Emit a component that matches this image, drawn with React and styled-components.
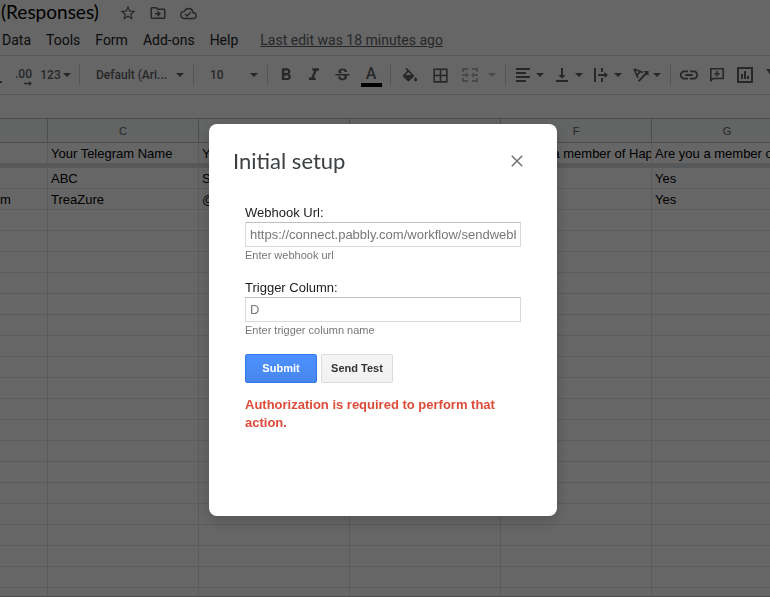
import React from "react";
import styled, { createGlobalStyle } from "styled-components";
import {
  MdStarBorder,
  MdOutlineDriveFileMove,
  MdOutlineCloudDone,
  MdFormatBold,
  MdFormatItalic,
  MdStrikethroughS,
  MdBorderAll,
  MdLink,
} from "react-icons/md";

const GlobalStyle = createGlobalStyle`
  * {
    box-sizing: border-box;
  }
  body {
    margin: 0;
    background: #fff;
    font-family: "Liberation Sans", Arial, sans-serif;
  }
  button,
  input,
  select {
    font-family: inherit;
    margin: 0;
  }
`;

const Page = styled.div`
  display: flex;
  flex-direction: column;
  height: 100vh;
  overflow: hidden;
`;

const TitleBar = styled.header`
  display: flex;
  align-items: center;
  height: 26px;
  flex-shrink: 0;
`;

const DocTitle = styled.h1`
  margin: 0;
  padding: 0 0 2px 1px;
  width: 113px;
  font: 400 19px/24px Lato, sans-serif;
  color: #000;
  white-space: nowrap;
`;

const IconButton = styled.button`
  display: inline-flex;
  align-items: center;
  justify-content: center;
  width: ${({ $width }) => $width || 28}px;
  height: 26px;
  padding: 0;
  border: 0;
  background: none;
  color: ${({ $muted }) => ($muted ? "#b8b8b8" : "#5f6368")};
  flex-shrink: 0;
`;

const MenuBar = styled.nav`
  display: flex;
  align-items: center;
  gap: 1px;
  height: 29px;
  padding-bottom: 2px;
  margin-left: -5px;
  flex-shrink: 0;
  white-space: nowrap;
`;

const MenuItem = styled.button`
  padding: 0 7px;
  border: 0;
  background: none;
  font: 400 14px/20px Roboto, sans-serif;
  color: #202124;
`;

const LastEdit = styled.a`
  margin-left: 14px;
  font: 400 14px/20px Roboto, sans-serif;
  color: #5f6368;
  text-decoration: underline;
`;

const Toolbar = styled.div`
  display: flex;
  align-items: center;
  height: 40px;
  flex-shrink: 0;
  overflow: hidden;
  border-top: 1px solid #dadce0;
  border-bottom: 1px solid #dadce0;
`;

const Stub = styled.span`
  width: 8px;
  height: 16px;
  flex-shrink: 0;
  background: linear-gradient(#5f6368, #5f6368) 0 100% / 2px 2px no-repeat;
`;

const Separator = styled.span`
  width: 1px;
  height: 20px;
  margin: 0 4px;
  flex-shrink: 0;
  background: #d0d2d5;
`;

const DecimalButton = styled(IconButton)`
  flex-direction: column;
  align-items: flex-end;
  justify-content: flex-end;
  padding: 0 4px 2px 0;
  font: 500 12px/14px Roboto, sans-serif;
`;

const NumberFormat = styled(IconButton)`
  gap: 2px;
  font: 500 12px/16px Roboto, sans-serif;
`;

const SelectBox = styled.label`
  display: flex;
  align-items: center;
  width: ${({ $width }) => $width}px;
  padding: 0 5px 0 12px;
  flex-shrink: 0;
  color: #5f6368;
`;

const ToolbarSelect = styled.select`
  appearance: none;
  flex: 1;
  min-width: 0;
  padding: 0;
  border: 0;
  background: none;
  color: inherit;
  font: 500 12px/16px Roboto, sans-serif;
`;

const SplitButton = styled(IconButton)`
  justify-content: flex-start;
  gap: ${({ $gap }) => $gap || 6}px;
  padding-left: ${({ $pad }) => $pad || 6}px;
`;

const ColorButton = styled(IconButton)`
  flex-direction: column;
  justify-content: flex-end;
  height: 32px;
  padding-bottom: 4px;
  font: 500 16px/18px Roboto, sans-serif;
`;

const ColorBar = styled.span`
  width: 21px;
  height: 4px;
  background: #000;
`;

const FormulaBar = styled.div`
  height: 23px;
  flex-shrink: 0;
`;

const SheetArea = styled.main`
  flex: 1;
  min-height: 0;
  overflow: hidden;
  border-top: 1px solid #c0c0c0;
  border-bottom: 1px solid #c0c0c0;
`;

const SheetTable = styled.table`
  table-layout: fixed;
  width: 803px;
  border-collapse: separate;
  border-spacing: 0;
`;

const ColumnHead = styled.th`
  height: 24px;
  padding: 0;
  border-right: 1px solid #c0c0c0;
  border-bottom: 1px solid #c0c0c0;
  background: #f8f9fa;
  font: 400 11px/16px "Liberation Sans", Arial, sans-serif;
  color: #5f6368;
`;

const Cell = styled.td`
  height: ${({ $frozen }) => ($frozen ? 25 : 21)}px;
  padding: 2px 0 0 ${({ $cut }) => ($cut ? 0 : 3)}px;
  border-right: 1px solid #e2e3e3;
  border-bottom: ${({ $frozen }) =>
    $frozen ? "5px solid #dadce0" : "1px solid #e2e3e3"};
  font-size: 13px;
  line-height: 16px;
  color: #000;
  white-space: nowrap;
  overflow: hidden;
`;

const Backdrop = styled.div`
  position: fixed;
  inset: 0;
  display: flex;
  align-items: flex-start;
  justify-content: center;
  padding: 124px 4px 0 0;
  background: rgba(0, 0, 0, 0.6);
`;

const Dialog = styled.section`
  width: 348px;
  min-height: 392px;
  padding: 24px;
  border-radius: 8px;
  background: #fff;
  box-shadow: 0 4px 16px rgba(0, 0, 0, 0.2);
`;

const DialogHeader = styled.div`
  display: flex;
  align-items: center;
  justify-content: space-between;
  margin-bottom: 28px;
  padding-right: 5px;
`;

const DialogTitle = styled.h2`
  margin: 0;
  font: 400 22px/26px Lato, sans-serif;
  color: #3c4043;
`;

const CloseButton = styled.button`
  display: flex;
  padding: 4px;
  border: 0;
  background: none;
  color: #757575;
`;

const Form = styled.form`
  padding: 0 12px;
`;

const Field = styled.div`
  display: flex;
  flex-direction: column;
  margin-bottom: 14px;
`;

const FieldLabel = styled.label`
  padding-top: 2px;
  font-size: 13px;
  line-height: 18px;
  color: #222;
`;

const TextInput = styled.input`
  height: 25px;
  padding: 1px 4px;
  border: 1px solid #d9d9d9;
  border-top-color: #c0c0c0;
  font-size: 13px;
  color: #333;

  &::placeholder {
    color: #777;
    opacity: 1;
  }
`;

const Help = styled.span`
  font-size: 11px;
  line-height: 16px;
  color: #777;
`;

const Actions = styled.div`
  display: flex;
  gap: 4px;
  padding-top: 2px;
`;

const ActionButton = styled.button`
  width: 72px;
  height: 29px;
  padding: 0 0 2px;
  border: 1px solid ${({ $primary }) => ($primary ? "#3079ed" : "#dcdcdc")};
  border-radius: 2px;
  background: ${({ $primary }) =>
    $primary
      ? "linear-gradient(#4d90fe, #4787ed)"
      : "linear-gradient(#f5f5f5, #f1f1f1)"};
  color: ${({ $primary }) => ($primary ? "#fff" : "#333")};
  font-size: 11px;
  font-weight: 700;
  white-space: nowrap;
`;

const ErrorText = styled.p`
  margin: 13px 0 0;
  font-size: 13px;
  font-weight: 700;
  line-height: 18px;
  color: #dd4b39;
`;

const Caret = () => (
  <svg width="8" height="4" viewBox="0 0 8 4" fill="currentColor">
    <path d="M0 0h8L4 4z" />
  </svg>
);

const DecimalArrow = () => (
  <svg width="8" height="5" viewBox="0 0 8 5" fill="currentColor">
    <path d="M0 1.700h5V0l3 2.500L5 5V3.300H0z" />
  </svg>
);

const FillIcon = () => (
  <svg width="16" height="16" viewBox="2 -1 20 20" fill="currentColor">
    <path d="M16.560 8.940L7.620 0 6.210 1.410l2.380 2.380-5.150 5.150c-.59.59-.59 1.540 0 2.120l5.500 5.500c.29.29.68.44 1.060.44s.77-.15 1.060-.44l5.500-5.500c.59-.58.59-1.530 0-2.120zM6.500 9L10 5.210 13.700 9zM19 11.500s-2 2.170-2 3.500c0 1.100.9 2 2 2s2-.9 2-2c0-1.330-2-3.500-2-3.500z" />
  </svg>
);

const MergeIcon = () => (
  <svg width="16" height="14" viewBox="0 0 16 14" fill="currentColor">
    <path d="M0 0h6v2H2v2H0zM10 0h6v4h-2V2h-4zM0 10h2v2h4v2H0zM14 10h2v4h-6v-2h4z" />
    <path d="M0 6h4V4l3 3-3 3V8H0zM16 6h-4V4L9 7l3 3V8h4z" />
  </svg>
);

const AlignIcon = () => (
  <svg width="14" height="14" viewBox="0 0 14 14" fill="currentColor">
    <path d="M0 0h14v2H0zM0 4h10v2H0zM0 8h14v2H0zM0 12h10v2H0z" />
  </svg>
);

const BottomIcon = () => (
  <svg width="14" height="14" viewBox="0 0 14 14" fill="currentColor">
    <path d="M6 0h2v7h2.500L7 10.500 3.500 7H6zM1 12h12v2H1z" />
  </svg>
);

const WrapIcon = () => (
  <svg width="14" height="14" viewBox="0 0 14 14" fill="currentColor">
    <path d="M0 0h2v14H0zM7 0h2v4H7zM7 10h2v4H7z" />
    <path d="M4 6h6.500V3.800L14 7l-3.500 3.200V8H4z" />
  </svg>
);

const RotateIcon = () => (
  <svg width="16" height="14" viewBox="0 0 16 14" fill="none" stroke="currentColor">
    <path d="M1 1l9 3.500M1 1l4 9M7.500 3.500L4 7.200" strokeWidth="1.700" />
    <path d="M5.500 13.300L13.500 5" strokeWidth="1.900" />
    <path d="M15.500 3v5l-5-5z" fill="currentColor" stroke="none" />
  </svg>
);

const CommentIcon = () => (
  <svg width="14" height="14" viewBox="0 0 14 14" fill="none" stroke="currentColor">
    <path d="M.8.8h12.400v9.700H3L.8 12.700z" strokeWidth="1.600" />
    <path d="M7 3v5.400M4.300 5.700h5.400" strokeWidth="1.500" />
  </svg>
);

const ChartIcon = () => (
  <svg width="16" height="16" viewBox="0 0 16 16" fill="currentColor">
    <path d="M0 0h16v16H0zM2 2v12h12V2z" fillRule="evenodd" />
    <path d="M4 7h2v5H4zM7 4h2v8H7zM10 9h2v3h-2z" />
  </svg>
);

const FilterIcon = () => (
  <svg width="14" height="14" viewBox="0 0 14 14" fill="currentColor">
    <path d="M0 1h14L9 8v6H5V8zM3.500 3L7 7.500 10.500 3z" fillRule="evenodd" />
  </svg>
);

const CloseIcon = () => (
  <svg width="14" height="14" viewBox="0 0 14 14" stroke="currentColor" strokeWidth="1.600">
    <path d="M1.800 1.800l10.400 10.400M12.200 1.800L1.800 12.200" />
  </svg>
);

const menus = ["Data", "Tools", "Form", "Add-ons", "Help"];
const columns = ["B", "C", "D", "E", "F", "G"];

const question = "Are you a member of Happy";
const rows = [
  ["", "Your Telegram Name", "Your Id", "", question, question],
  ["", "ABC", "S", "", "", "Yes"],
  ["m", "TreaZure", "@", "", "", "Yes"],
  ...Array.from({ length: 24 }, () => ["", "", "", "", "", ""]),
];

const SheetToolbar = () => (
  <Toolbar role="toolbar" aria-label="Formatting">
    <Stub />
    <DecimalButton aria-label="Increase decimal places">
      .00
      <DecimalArrow />
    </DecimalButton>
    <NumberFormat $width={39}>
      123
      <Caret />
    </NumberFormat>
    <Separator />
    <SelectBox $width={105}>
      <ToolbarSelect aria-label="Font">
        <option>Default (Ari...</option>
      </ToolbarSelect>
      <Caret />
    </SelectBox>
    <Separator />
    <SelectBox $width={65}>
      <ToolbarSelect aria-label="Font size">
        <option>10</option>
      </ToolbarSelect>
      <Caret />
    </SelectBox>
    <Separator />
    <IconButton aria-label="Bold">
      <MdFormatBold size={20} />
    </IconButton>
    <IconButton aria-label="Italic">
      <MdFormatItalic size={20} />
    </IconButton>
    <IconButton aria-label="Strikethrough">
      <MdStrikethroughS size={19} />
    </IconButton>
    <ColorButton $width={30} aria-label="Text color">
      A
      <ColorBar />
    </ColorButton>
    <Separator />
    <IconButton $width={30} aria-label="Fill color">
      <FillIcon />
    </IconButton>
    <IconButton $width={30} aria-label="Borders">
      <MdBorderAll size={19} />
    </IconButton>
    <SplitButton $width={46} $pad={7} $gap={10} $muted aria-label="Merge cells">
      <MergeIcon />
      <Caret />
    </SplitButton>
    <Separator />
    <SplitButton $width={39} aria-label="Horizontal align">
      <AlignIcon />
      <Caret />
    </SplitButton>
    <SplitButton $width={39} aria-label="Vertical align">
      <BottomIcon />
      <Caret />
    </SplitButton>
    <SplitButton $width={39} aria-label="Text wrapping">
      <WrapIcon />
      <Caret />
    </SplitButton>
    <SplitButton $width={39} $gap={4} aria-label="Text rotation">
      <RotateIcon />
      <Caret />
    </SplitButton>
    <Separator />
    <IconButton aria-label="Insert link">
      <MdLink size={22} />
    </IconButton>
    <IconButton aria-label="Insert comment">
      <CommentIcon />
    </IconButton>
    <IconButton aria-label="Insert chart">
      <ChartIcon />
    </IconButton>
    <IconButton aria-label="Create a filter">
      <FilterIcon />
    </IconButton>
  </Toolbar>
);

const Sheet = () => (
  <SheetArea>
    <SheetTable>
      <colgroup>
        {columns.map((name, index) => (
          <col key={name} width={index === 0 ? 48 : 151} />
        ))}
      </colgroup>
      <thead>
        <tr>
          {columns.map((name, index) => (
            <ColumnHead key={name} scope="col">
              {index === 0 ? "" : name}
            </ColumnHead>
          ))}
        </tr>
      </thead>
      <tbody>
        {rows.map((row, rowIndex) => (
          <tr key={rowIndex}>
            {row.map((value, index) => (
              <Cell key={index} $frozen={rowIndex === 0} $cut={index === 0}>
                {value}
              </Cell>
            ))}
          </tr>
        ))}
      </tbody>
    </SheetTable>
  </SheetArea>
);

const SetupDialog = () => (
  <Backdrop>
    <Dialog role="dialog" aria-modal="true" aria-labelledby="setup-title">
      <DialogHeader>
        <DialogTitle id="setup-title">Initial setup</DialogTitle>
        <CloseButton aria-label="Close">
          <CloseIcon />
        </CloseButton>
      </DialogHeader>
      <Form onSubmit={(e) => e.preventDefault()}>
        <Field>
          <FieldLabel htmlFor="webhook">Webhook Url:</FieldLabel>
          <TextInput
            id="webhook"
            type="text"
            placeholder="https://connect.pabbly.com/workflow/sendwebhookdata/"
          />
          <Help>Enter webhook url</Help>
        </Field>
        <Field>
          <FieldLabel htmlFor="trigger">Trigger Column:</FieldLabel>
          <TextInput id="trigger" type="text" placeholder="D" />
          <Help>Enter trigger column name</Help>
        </Field>
        <Actions>
          <ActionButton $primary type="submit">
            Submit
          </ActionButton>
          <ActionButton type="button">Send Test</ActionButton>
        </Actions>
        <ErrorText role="alert">
          Authorization is required to perform that action.
        </ErrorText>
      </Form>
    </Dialog>
  </Backdrop>
);

const App = () => {
  return (
    <>
      <GlobalStyle />
      <Page>
        <TitleBar>
          <DocTitle>(Responses)</DocTitle>
          <IconButton $width={30} aria-label="Star">
            <MdStarBorder size={18} />
          </IconButton>
          <IconButton $width={30} aria-label="Move">
            <MdOutlineDriveFileMove size={18} />
          </IconButton>
          <IconButton $width={30} aria-label="Document status">
            <MdOutlineCloudDone size={17} />
          </IconButton>
        </TitleBar>
        <MenuBar>
          {menus.map((menu) => (
            <MenuItem key={menu}>{menu}</MenuItem>
          ))}
          <LastEdit href="#">Last edit was 18 minutes ago</LastEdit>
        </MenuBar>
        <SheetToolbar />
        <FormulaBar />
        <Sheet />
      </Page>
      <SetupDialog />
    </>
  );
};

export default App;
